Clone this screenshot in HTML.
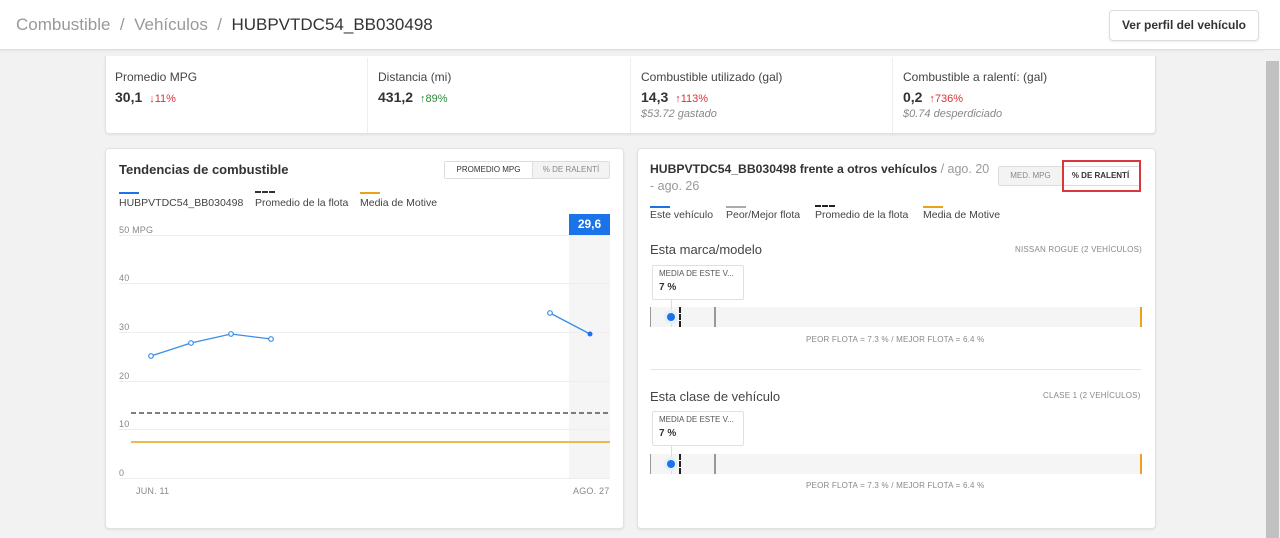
<!DOCTYPE html>
<html><head><meta charset="utf-8"><style>
*{margin:0;padding:0;box-sizing:border-box}
body{width:1280px;height:538px;overflow:hidden;background:#f2f2f2;font-family:"Liberation Sans",sans-serif;color:#222;position:relative}
.a{position:absolute;white-space:nowrap}
.card{position:absolute;background:#fff;border:1px solid #e2e2e2;border-radius:4px;box-shadow:0 1px 2px rgba(0,0,0,.08)}
.sm{font-size:9px;color:#888;letter-spacing:.2px}
</style></head><body>
<div class="a" style="left:0;top:0;width:1280px;height:50px;background:#fff;border-bottom:1px solid #ddd;box-shadow:0 1px 3px rgba(0,0,0,.06)"></div>
<div class="a" style="left:16px;top:15px;font-size:17px;color:#999">Combustible &nbsp;/&nbsp; Vehículos &nbsp;/&nbsp; <span style="color:#333">HUBPVTDC54_BB030498</span></div>
<div class="a" style="left:1109px;top:10px;width:150px;height:31px;border:1px solid #ddd;border-radius:4px;background:#fff;box-shadow:0 1px 2px rgba(0,0,0,.08);font-size:12px;font-weight:bold;color:#333;text-align:center;line-height:29px">Ver perfil del vehículo</div>
<div class="a" style="left:1265px;top:50px;width:15px;height:488px;background:#f1f1f1"></div>
<div class="a" style="left:1266px;top:61px;width:13px;height:477px;background:#c1c1c1"></div>

<div class="card" style="left:105px;top:56px;width:1051px;height:78px;border-top:none;border-radius:0 0 4px 4px"></div>
<div class="a" style="left:367px;top:58px;width:1px;height:75px;background:#eee"></div>
<div class="a" style="left:630px;top:58px;width:1px;height:75px;background:#eee"></div>
<div class="a" style="left:892px;top:58px;width:1px;height:75px;background:#eee"></div>
<div class="a" style="left:115px;top:70px;font-size:12px;color:#444">Promedio MPG</div>
<div class="a" style="left:115px;top:89px;font-size:14px;font-weight:bold;color:#333">30,1 <span style="font-size:11px;font-weight:normal;color:#d33">&nbsp;↓11%</span></div>
<div class="a" style="left:378px;top:70px;font-size:12px;color:#444">Distancia (mi)</div>
<div class="a" style="left:378px;top:89px;font-size:14px;font-weight:bold;color:#333">431,2 <span style="font-size:11px;font-weight:normal;color:#2a8a3a">&nbsp;↑89%</span></div>
<div class="a" style="left:641px;top:70px;font-size:12px;color:#444">Combustible utilizado (gal)</div>
<div class="a" style="left:641px;top:89px;font-size:14px;font-weight:bold;color:#333">14,3 <span style="font-size:11px;font-weight:normal;color:#d33">&nbsp;↑113%</span></div>
<div class="a" style="left:641px;top:108px;font-size:11px;color:#888;font-style:italic">$53.72 gastado</div>
<div class="a" style="left:903px;top:70px;font-size:12px;color:#444">Combustible a ralentí: (gal)</div>
<div class="a" style="left:903px;top:89px;font-size:14px;font-weight:bold;color:#333">0,2 <span style="font-size:11px;font-weight:normal;color:#d33">&nbsp;↑736%</span></div>
<div class="a" style="left:903px;top:108px;font-size:11px;color:#888;font-style:italic">$0.74 desperdiciado</div>

<!-- left card -->
<div class="card" style="left:105px;top:148px;width:519px;height:381px"></div>
<div class="a" style="left:119px;top:162px;font-size:13px;font-weight:bold;color:#333">Tendencias de combustible</div>
<div class="a" style="left:444px;top:161px;width:166px;height:18px;border:1px solid #ddd;border-radius:2px;font-size:8px;line-height:16px;display:flex"><div style="width:87px;text-align:center;color:#333;background:#fff">PROMEDIO MPG</div><div style="flex:1;text-align:center;color:#888;background:#f3f3f3;border-left:1px solid #ddd">% DE RALENTÍ</div></div>
<div class="a" style="left:119px;top:192px;width:20px;height:2px;background:#1a73e8"></div>
<div class="a" style="left:255px;top:191px;width:20px;border-top:2px dashed #333"></div>
<div class="a" style="left:360px;top:192px;width:20px;height:2px;background:#e8a317"></div>
<div class="a" style="left:119px;top:197px;font-size:10.5px;color:#444">HUBPVTDC54_BB030498</div>
<div class="a" style="left:255px;top:197px;font-size:10.5px;color:#444">Promedio de la flota</div>
<div class="a" style="left:360px;top:197px;font-size:10.5px;color:#444">Media de Motive</div>
<div class="a" style="left:569px;top:214px;width:41px;height:264px;background:#f5f5f5"></div>
<div class="a" style="left:569px;top:214px;width:41px;height:21px;background:#1a73e8;color:#fff;font-size:12px;font-weight:bold;text-align:center;line-height:21px">29,6</div>
<svg class="a" style="left:0;top:0" width="640" height="538">
<g stroke="#eee" stroke-width="1"><line x1="119" y1="235.5" x2="610" y2="235.5"/><line x1="119" y1="283.5" x2="610" y2="283.5"/><line x1="119" y1="332.5" x2="610" y2="332.5"/><line x1="119" y1="381.5" x2="610" y2="381.5"/><line x1="119" y1="429.5" x2="610" y2="429.5"/><line x1="119" y1="478.5" x2="610" y2="478.5"/></g>
<line x1="131" y1="413" x2="610" y2="413" stroke="#555" stroke-width="1.5" stroke-dasharray="5,3"/>
<line x1="131" y1="442" x2="610" y2="442" stroke="#e8a317" stroke-width="1.5"/>
<polyline points="151,356 191,343 231,334 271,339" fill="none" stroke="#3b8de8" stroke-width="1.3"/>
<polyline points="550,313 590,334" fill="none" stroke="#3b8de8" stroke-width="1.3"/>
<g fill="#fff" stroke="#3b8de8" stroke-width="1.2"><circle cx="151" cy="356" r="2.3"/><circle cx="191" cy="343" r="2.3"/><circle cx="231" cy="334" r="2.3"/><circle cx="271" cy="339" r="2.3"/><circle cx="550" cy="313" r="2.3"/></g>
<circle cx="590" cy="334" r="2.5" fill="#1a73e8"/>
</svg>
<div class="a sm" style="left:119px;top:225px">50 MPG</div>
<div class="a sm" style="left:119px;top:273px">40</div>
<div class="a sm" style="left:119px;top:322px">30</div>
<div class="a sm" style="left:119px;top:371px">20</div>
<div class="a sm" style="left:119px;top:419px">10</div>
<div class="a sm" style="left:119px;top:468px">0</div>
<div class="a sm" style="left:136px;top:486px">JUN. 11</div>
<div class="a sm" style="left:573px;top:486px">AGO. 27</div>

<!-- right card -->
<div class="card" style="left:637px;top:148px;width:519px;height:381px"></div>
<div class="a" style="left:650px;top:162px;font-size:12.2px;font-weight:bold;color:#333">HUBPVTDC54_BB030498 frente a otros vehículos <span style="font-weight:normal;color:#999;font-size:12.5px">/ ago. 20</span></div>
<div class="a" style="left:650px;top:179px;font-size:12.5px;color:#999">- ago. 26</div>
<div class="a" style="left:998px;top:166px;width:142px;height:20px;border:1px solid #ddd;border-radius:2px;font-size:8px;line-height:18px;display:flex"><div style="width:63px;text-align:center;color:#888;background:#f3f3f3">MED. MPG</div><div style="flex:1;text-align:center;color:#333;font-weight:bold;background:#fff">% DE RALENTÍ</div></div>
<div class="a" style="left:1062px;top:160px;width:79px;height:32px;border:2px solid #d9363e"></div>
<div class="a" style="left:650px;top:206px;width:20px;height:2px;background:#1a73e8"></div>
<div class="a" style="left:726px;top:206px;width:20px;height:2px;background:#aaa"></div>
<div class="a" style="left:815px;top:205px;width:20px;border-top:2px dashed #222"></div>
<div class="a" style="left:923px;top:206px;width:20px;height:2px;background:#e8a317"></div>
<div class="a" style="left:650px;top:209px;font-size:10.5px;color:#444">Este vehículo</div>
<div class="a" style="left:726px;top:209px;font-size:10.5px;color:#444">Peor/Mejor flota</div>
<div class="a" style="left:815px;top:209px;font-size:10.5px;color:#444">Promedio de la flota</div>
<div class="a" style="left:923px;top:209px;font-size:10.5px;color:#444">Media de Motive</div>

<div class="a" style="left:650px;top:242px;font-size:13px;color:#444">Esta marca/modelo</div>
<div class="a sm" style="left:1015px;top:245px;font-size:8px">NISSAN ROGUE (2 VEHÍCULOS)</div>
<div class="a" style="left:652px;top:265px;width:92px;height:35px;border:1px solid #e0e0e0;border-radius:2px;background:#fff"></div>
<div class="a" style="left:659px;top:269px;font-size:8px;color:#555">MEDIA DE ESTE V...</div>
<div class="a" style="left:659px;top:282px;font-size:10px;font-weight:bold;color:#333">7 %</div>
<div class="a" style="left:650px;top:307px;width:492px;height:20px;background:#f5f5f5"></div>
<div class="a" style="left:671px;top:300px;width:1px;height:27px;background:#ddd"></div>
<div class="a" style="left:650px;top:307px;width:1px;height:20px;background:#999"></div>
<div class="a" style="left:714px;top:307px;width:2px;height:20px;background:#999"></div>
<div class="a" style="left:679px;top:307px;height:20px;border-left:2px dashed #222"></div>
<div class="a" style="left:1140px;top:307px;width:2px;height:20px;background:#e8a317"></div>
<div class="a" style="left:664px;top:310px;width:14px;height:14px;border-radius:50%;background:#e6f0fc"></div>
<div class="a" style="left:667px;top:313px;width:8px;height:8px;border-radius:50%;background:#1a73e8"></div>
<div class="a sm" style="left:806px;top:335px;font-size:8px">PEOR FLOTA = 7.3 % / MEJOR FLOTA = 6.4 %</div>
<div class="a" style="left:650px;top:369px;width:491px;height:1px;background:#e6e6e6"></div>

<div class="a" style="left:650px;top:389px;font-size:13px;color:#444">Esta clase de vehículo</div>
<div class="a sm" style="left:1043px;top:391px;font-size:8px">CLASE 1 (2 VEHÍCULOS)</div>
<div class="a" style="left:652px;top:411px;width:92px;height:35px;border:1px solid #e0e0e0;border-radius:2px;background:#fff"></div>
<div class="a" style="left:659px;top:415px;font-size:8px;color:#555">MEDIA DE ESTE V...</div>
<div class="a" style="left:659px;top:428px;font-size:10px;font-weight:bold;color:#333">7 %</div>
<div class="a" style="left:650px;top:454px;width:492px;height:20px;background:#f5f5f5"></div>
<div class="a" style="left:671px;top:446px;width:1px;height:28px;background:#ddd"></div>
<div class="a" style="left:650px;top:454px;width:1px;height:20px;background:#999"></div>
<div class="a" style="left:714px;top:454px;width:2px;height:20px;background:#999"></div>
<div class="a" style="left:679px;top:454px;height:20px;border-left:2px dashed #222"></div>
<div class="a" style="left:1140px;top:454px;width:2px;height:20px;background:#e8a317"></div>
<div class="a" style="left:664px;top:457px;width:14px;height:14px;border-radius:50%;background:#e6f0fc"></div>
<div class="a" style="left:667px;top:460px;width:8px;height:8px;border-radius:50%;background:#1a73e8"></div>
<div class="a sm" style="left:806px;top:481px;font-size:8px">PEOR FLOTA = 7.3 % / MEJOR FLOTA = 6.4 %</div>
</body></html>
